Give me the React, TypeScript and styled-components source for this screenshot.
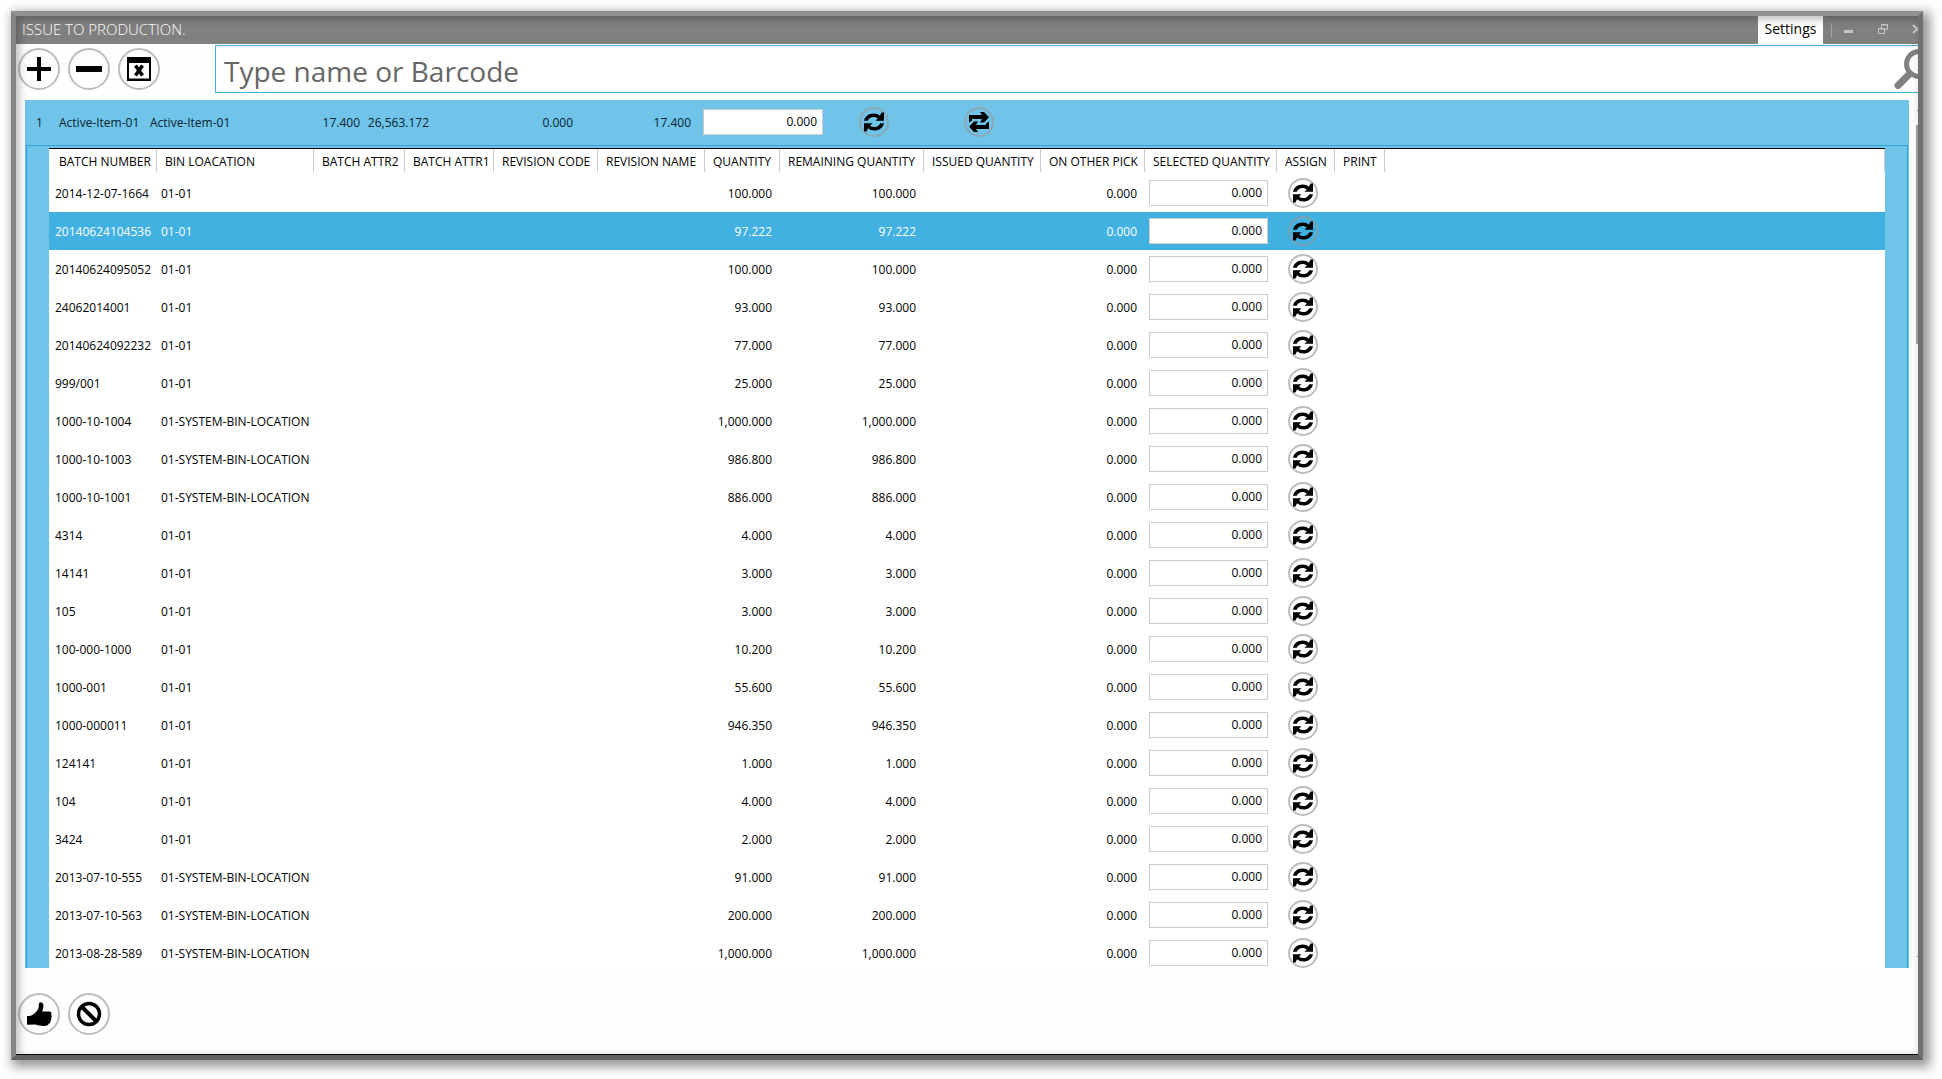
import React from "react";
import styled, { createGlobalStyle, css } from "styled-components";

const GlobalStyle = createGlobalStyle`
  *, *::before, *::after { box-sizing: border-box; }
  body {
    margin: 0;
    background: #fefefe;
    color: #000;
    font-family: "Segoe UI", "Open Sans", "Noto Sans", sans-serif;
    font-size: 12px;
    line-height: 16px;
  }
  button, input { font: inherit; color: inherit; }
`;

const Page = styled.div`
  display: flex;
  height: 100vh;
  padding: 11px 19px 19px 11px;
`;

const Window = styled.main`
  position: relative;
  display: flex;
  flex: 1;
  flex-direction: column;
  min-width: 0;
  overflow: hidden;
  background: #fefefe;
  border: 5px solid;
  border-color: #919191 #717171 #656364 #858585;
  box-shadow: 4px 4px 10px 3px rgba(0, 0, 0, 0.4);

  &::after {
    content: "";
    position: absolute;
    inset: 0;
    pointer-events: none;
    border-bottom: 1px solid #08060f;
    box-shadow: inset 3px 3px 8px rgba(0, 0, 0, 0.28);
  }
`;

const TitleBar = styled.header`
  display: flex;
  flex: none;
  height: 28px;
  padding-left: 6px;
  align-items: center;
  background: #808080;
  color: #fff;
`;

const Title = styled.h1`
  flex: 1;
  margin: 0;
  padding-bottom: 2px;
  font-size: 15px;
  font-weight: 300;
  line-height: 20px;
`;

const SettingsButton = styled.button`
  align-self: stretch;
  width: 65px;
  padding: 0 0 2px;
  border: 0;
  background: #fff;
  color: #000;
  font-size: 14px;
`;

const Divider = styled.span`
  width: 1px;
  height: 15px;
  margin-left: 8px;
  background: #a3a3a3;
`;

const WindowButtons = styled.div`
  display: flex;
  flex: none;
  width: 86px;
  overflow: hidden;
`;

const WindowButton = styled.button`
  display: flex;
  flex: none;
  width: 34px;
  height: 28px;
  padding: 0 0 2px;
  align-items: center;
  justify-content: center;
  border: 0;
  background: none;
  color: #c6c6c6;
`;

const Toolbar = styled.div`
  display: flex;
  flex: none;
  height: 56px;
  padding: 1px 0 0 2px;
`;

const ButtonGroup = styled.div`
  display: flex;
  gap: 8px;
  padding-top: 3px;
`;

const RoundButton = styled.button<{ $size: number }>`
  display: flex;
  flex: none;
  width: ${(p) => p.$size}px;
  height: ${(p) => p.$size}px;
  padding: 0;
  align-items: center;
  justify-content: center;
  border: 2px solid rgba(153, 153, 153, 0.65);
  border-radius: 50%;
  background: none;
  color: #000;
`;

const SearchField = styled.label`
  display: flex;
  flex: 1;
  height: 48px;
  margin-left: 55px;
  border: 1px solid #41b1e1;
  border-right: 0;
  background: #fff;
  overflow: hidden;
`;

const SearchInput = styled.input`
  flex: 1;
  min-width: 0;
  padding: 4px 8px 0;
  border: 0;
  outline: 0;
  background: none;
  font-size: 28px;

  &::placeholder { color: #666; opacity: 1; }
`;

const SearchIcon = styled.svg`
  flex: none;
  margin: 3px -16px 0 0;
`;

const Content = styled.section`
  display: flex;
  flex: 1;
  min-height: 0;
  padding-left: 9px;
`;

const Panel = styled.div`
  flex: 1;
  min-width: 0;
  overflow: hidden;
  background: #70c4e9;
`;

const ItemRow = styled.div`
  display: grid;
  grid-template-columns: 23px 91px 102px 108px 69px 144px 118px 168px 105px 1fr;
  height: 45px;
  padding: 0 0 1px 11px;
  align-items: center;
  color: #06222e;
`;

const ItemCell = styled.span<{ $right?: boolean }>`
  padding-top: 2px;
  ${(p) => p.$right && css`text-align: right;`}
`;

const ItemField = styled.div`
  padding-left: 12px;
`;

const QuantityInput = styled.input<{ $width: number }>`
  display: block;
  width: ${(p) => p.$width}px;
  height: 26px;
  padding: 0 5px 2px;
  border: 1px solid #ccc;
  border-radius: 0;
  outline: 0;
  background: #fff;
  color: #000;
  text-align: right;
`;

const Details = styled.div`
  margin: 0 1px;
  padding: 2px 22px 0;
  border: 1px solid #2ea3d8;
  border-bottom: 0;
`;

const BatchTable = styled.table`
  width: 100%;
  border-collapse: separate;
  border-spacing: 0;
  border-top: 1px solid #000;
  table-layout: fixed;
  background: #fff;
`;

const HeadCell = styled.th`
  height: 25px;
  padding: 1px 0 0 8px;
  font-weight: 500;
  text-align: left;
  white-space: nowrap;
  background: linear-gradient(#ccc, #ccc) right top / 1px 23px no-repeat;

  &:first-child { padding-left: 10px; }
`;

const Row = styled.tr<{ $selected: boolean }>`
  ${(p) => p.$selected && css`
    background: #41b1e1;
    color: #fff;
  `}
`;

const Cell = styled.td<{ $right?: boolean }>`
  height: 38px;
  padding: 2px ${(p) => (p.$right ? 8 : 0)}px 0 4px;
  text-align: ${(p) => (p.$right ? "right" : "left")};
  white-space: nowrap;

  &:first-child { padding-left: 6px; }
`;

const ControlCell = styled(Cell)<{ $indent: number }>`
  padding: 0 0 0 ${(p) => p.$indent}px;
`;

const ScrollTrack = styled.div`
  display: flex;
  flex: none;
  width: 9px;
  padding: 10px 0 11px;
  flex-direction: column;
  align-items: flex-end;
`;

const ScrollArrow = styled.span`
  width: 1px;
  height: 1px;
  background: #777;
`;

const ScrollThumb = styled.div`
  width: 2px;
  height: 219px;
  margin: 14px 0 auto;
  background: #a6a6a6;
`;

const Footer = styled.footer`
  display: flex;
  flex: none;
  gap: 8px;
  height: 87px;
  padding: 25px 0 0 2px;
`;

const Refresh = () => (
  <svg width="22" height="22" viewBox="0 0 22 22" aria-hidden="true">
    <path d="M1 9.800C1.800 5.300 5.800 2.500 10.500 2.500c2.600 0 4.800.8 6.400 2.200L18.500 1.500H21v8.300h-8.500l2.400-2.300C13.800 6.400 12.300 5.900 10.700 5.900 7.900 5.900 5.600 7.400 4.700 9.800z" fill="currentColor" />
    <path d="M21 12.200c-.8 4.500-4.800 7.300-9.500 7.300-2.600 0-4.800-.8-6.400-2.200L3.500 20.500H1v-8.300h8.500l-2.400 2.300c1.100 1.100 2.600 1.600 4.200 1.600 2.800 0 5.100-1.500 6-3.900z" fill="currentColor" />
  </svg>
);

const Swap = () => (
  <svg width="22" height="22" viewBox="0 0 22 22" aria-hidden="true">
    <path d="M1 11.500V4h13l-2-3h4l5 5.200-5 5.300h-4l2-3.500H4v1.500z" fill="currentColor" />
    <path d="M21 10.500V18H8l2 3H6l-5-5.200 5-5.300h4L8 14h10v-1.500z" fill="currentColor" />
  </svg>
);

const Plus = () => (
  <svg width="26" height="26" viewBox="0 0 26 26" aria-hidden="true">
    <path d="M1 13h24M13 1v24" stroke="currentColor" strokeWidth="4" />
  </svg>
);

const Minus = () => (
  <svg width="26" height="26" viewBox="0 0 26 26" aria-hidden="true">
    <path d="M0 13h26" stroke="currentColor" strokeWidth="6" />
  </svg>
);

const CloseWindow = () => (
  <svg width="26" height="26" viewBox="0 0 26 26" aria-hidden="true">
    <path d="M1 1h24v24H1zM3 7v15.500h20V7z" fill="currentColor" fillRule="evenodd" />
    <path d="M9.500 9.500l7 10M16.500 9.500l-7 10" stroke="currentColor" strokeWidth="3.500" />
  </svg>
);

const Thumb = () => (
  <svg width="26" height="26" viewBox="0 0 26 26" aria-hidden="true">
    <path d="M1 15c3 0 6-.5 8.500-3.500C12 9 13 7 12.800 4.500 12.600 2 13.500 1 15 1.200c2.500.5 3.300 3.300 1.500 8.300l-.3 1h7c2 0 2.800 1.500 1.800 3 1 1 .9 2.500 0 3.300.7 1.200.3 2.400-.6 3 .3 1.400-.4 2.500-1.700 2.800-.3 1.600-1.400 2.200-3.400 2.300-4 .2-7-.3-10.300-1.400L1 23.700z" fill="currentColor" />
  </svg>
);

const Ban = () => (
  <svg width="26" height="26" viewBox="0 0 26 26" fill="none" stroke="currentColor" aria-hidden="true">
    <circle cx="13" cy="13" r="10.500" strokeWidth="3.500" />
    <path d="M5.500 5.500l15 15" strokeWidth="4" />
  </svg>
);

const COLUMNS: [string, number | undefined][] = [
  ["BATCH NUMBER", 108],
  ["BIN LOACATION", 157],
  ["BATCH ATTR2", 91],
  ["BATCH ATTR1", 89],
  ["REVISION CODE", 104],
  ["REVISION NAME", 107],
  ["QUANTITY", 75],
  ["REMAINING QUANTITY", 144],
  ["ISSUED QUANTITY", 117],
  ["ON OTHER PICK", 104],
  ["SELECTED QUANTITY", 132],
  ["ASSIGN", 58],
  ["PRINT", 50],
  ["", undefined],
];

const BIN = "01-01";
const SYSTEM_BIN = "01-SYSTEM-BIN-LOCATION";

const BATCHES: [string, string, string][] = [
  ["2014-12-07-1664", BIN, "100.000"],
  ["20140624104536", BIN, "97.222"],
  ["20140624095052", BIN, "100.000"],
  ["24062014001", BIN, "93.000"],
  ["20140624092232", BIN, "77.000"],
  ["999/001", BIN, "25.000"],
  ["1000-10-1004", SYSTEM_BIN, "1,000.000"],
  ["1000-10-1003", SYSTEM_BIN, "986.800"],
  ["1000-10-1001", SYSTEM_BIN, "886.000"],
  ["4314", BIN, "4.000"],
  ["14141", BIN, "3.000"],
  ["105", BIN, "3.000"],
  ["100-000-1000", BIN, "10.200"],
  ["1000-001", BIN, "55.600"],
  ["1000-000011", BIN, "946.350"],
  ["124141", BIN, "1.000"],
  ["104", BIN, "4.000"],
  ["3424", BIN, "2.000"],
  ["2013-07-10-555", SYSTEM_BIN, "91.000"],
  ["2013-07-10-563", SYSTEM_BIN, "200.000"],
  ["2013-08-28-589", SYSTEM_BIN, "1,000.000"],
];

export default function App() {
  const [selected, setSelected] = React.useState(1);

  return (
    <>
      <GlobalStyle />
      <Page>
        <Window>
          <TitleBar>
            <Title>ISSUE TO PRODUCTION.</Title>
            <SettingsButton type="button">Settings</SettingsButton>
            <Divider />
            <WindowButtons>
              <WindowButton type="button" aria-label="Minimize">
                <svg width="10" height="10" viewBox="0 0 10 10"><path d="M0 6h9v3H0z" fill="currentColor" /></svg>
              </WindowButton>
              <WindowButton type="button" aria-label="Restore">
                <svg width="10" height="10" viewBox="0 0 10 10" fill="none" stroke="currentColor">
                  <path d="M3.500 4V.5h6v5H7M.5 4.500h6v5h-6zM3 1h7M0 5h7" />
                </svg>
              </WindowButton>
              <WindowButton type="button" aria-label="Close">
                <svg width="10" height="10" viewBox="0 0 10 10" fill="none" stroke="currentColor">
                  <path d="M1 1l8 8M9 1L1 9" strokeWidth="2" />
                </svg>
              </WindowButton>
            </WindowButtons>
          </TitleBar>

          <Toolbar>
            <ButtonGroup>
              <RoundButton type="button" $size={42} aria-label="Add"><Plus /></RoundButton>
              <RoundButton type="button" $size={42} aria-label="Remove"><Minus /></RoundButton>
              <RoundButton type="button" $size={42} aria-label="Close list"><CloseWindow /></RoundButton>
            </ButtonGroup>
            <SearchField>
              <SearchInput type="text" placeholder="Type name or Barcode" aria-label="Type name or Barcode" />
              <SearchIcon width="40" height="40" viewBox="0 0 40 40" fill="none" stroke="#808080" aria-hidden="true">
                <circle cx="25" cy="15" r="12.500" strokeWidth="5" />
                <path d="M15.500 25L4 36.500" strokeWidth="7" strokeLinecap="round" />
              </SearchIcon>
            </SearchField>
          </Toolbar>

          <Content>
            <Panel>
              <ItemRow>
                <ItemCell>1</ItemCell>
                <ItemCell>Active-Item-01</ItemCell>
                <ItemCell>Active-Item-01</ItemCell>
                <ItemCell $right>17.400</ItemCell>
                <ItemCell $right>26,563.172</ItemCell>
                <ItemCell $right>0.000</ItemCell>
                <ItemCell $right>17.400</ItemCell>
                <ItemField>
                  <QuantityInput $width={120} defaultValue="0.000" aria-label="Item quantity" />
                </ItemField>
                <RoundButton type="button" $size={30} aria-label="Assign item"><Refresh /></RoundButton>
                <RoundButton type="button" $size={30} aria-label="Swap item"><Swap /></RoundButton>
              </ItemRow>
              <Details>
                <BatchTable>
                  <colgroup>
                    {COLUMNS.map(([name, width]) => <col key={name} width={width} />)}
                  </colgroup>
                  <thead>
                    <tr>
                      {COLUMNS.map(([name]) => <HeadCell key={name} scope="col">{name}</HeadCell>)}
                    </tr>
                  </thead>
                  <tbody>
                    {BATCHES.map(([batch, bin, quantity], i) => (
                      <Row key={batch} $selected={i === selected} onClick={() => setSelected(i)}>
                        <Cell>{batch}</Cell>
                        <Cell>{bin}</Cell>
                        <Cell />
                        <Cell />
                        <Cell />
                        <Cell />
                        <Cell $right>{quantity}</Cell>
                        <Cell $right>{quantity}</Cell>
                        <Cell />
                        <Cell $right>0.000</Cell>
                        <ControlCell $indent={4}>
                          <QuantityInput $width={119} defaultValue="0.000" aria-label={`Selected quantity for ${batch}`} />
                        </ControlCell>
                        <ControlCell $indent={11}>
                          <RoundButton type="button" $size={30} aria-label={`Assign ${batch}`}><Refresh /></RoundButton>
                        </ControlCell>
                        <Cell />
                        <Cell />
                      </Row>
                    ))}
                  </tbody>
                </BatchTable>
              </Details>
            </Panel>
            <ScrollTrack>
              <ScrollArrow />
              <ScrollThumb />
              <ScrollArrow />
            </ScrollTrack>
          </Content>

          <Footer>
            <RoundButton type="button" $size={42} aria-label="Confirm"><Thumb /></RoundButton>
            <RoundButton type="button" $size={42} aria-label="Cancel"><Ban /></RoundButton>
          </Footer>
        </Window>
      </Page>
    </>
  );
}
